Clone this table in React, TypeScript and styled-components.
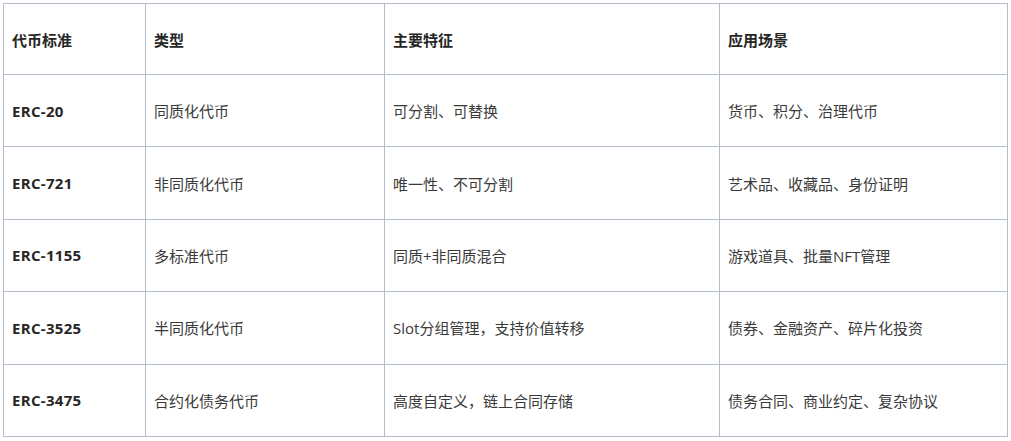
import React from "react";
import styled, { createGlobalStyle } from "styled-components";

const Global = createGlobalStyle`
  html, body { margin: 0; padding: 0; background: #ffffff; }
  body { font-family: "Open Sans", "Noto Sans CJK SC", sans-serif; }
`;

const Wrap = styled.div`
  padding: 3px 0 0 3px;
`;

const Table = styled.table`
  border-collapse: collapse;
  table-layout: fixed;
  width: 1004px;
  color: #333333;
  font-size: 15px;
`;

const Cell = styled.td<{ $bold?: boolean }>`
  border: 1px solid #b4bfcb;
  height: 71.4px;
  padding: 0 0 0 8px;
  vertical-align: middle;
  font-weight: ${(p) => (p.$bold ? 700 : 400)};
  color: ${(p) => (p.$bold ? "#262626" : "#3a3a3a")};
  letter-spacing: ${(p) => (p.$bold ? "0.3px" : "0")};
  white-space: nowrap;
`;

const Head = styled(Cell).attrs({ as: "th" })`
  height: 70px;
  text-align: left;
  font-weight: 700;
  color: #262626;
  letter-spacing: 0;
`;

const rows = [
  ["ERC-20", "同质化代币", "可分割、可替换", "货币、积分、治理代币"],
  ["ERC-721", "非同质化代币", "唯一性、不可分割", "艺术品、收藏品、身份证明"],
  ["ERC-1155", "多标准代币", "同质+非同质混合", "游戏道具、批量NFT管理"],
  ["ERC-3525", "半同质化代币", "Slot分组管理，支持价值转移", "债券、金融资产、碎片化投资"],
  ["ERC-3475", "合约化债务代币", "高度自定义，链上合同存储", "债务合同、商业约定、复杂协议"],
];

export default function App() {
  return (
    <Wrap>
      <Global />
      <Table>
        <colgroup>
          <col style={{ width: 142 }} />
          <col style={{ width: 239 }} />
          <col style={{ width: 335 }} />
          <col style={{ width: 288 }} />
        </colgroup>
        <thead>
          <tr>
            <Head>代币标准</Head>
            <Head>类型</Head>
            <Head>主要特征</Head>
            <Head>应用场景</Head>
          </tr>
        </thead>
        <tbody>
          {rows.map((r) => (
            <tr key={r[0]}>
              <Cell $bold>{r[0]}</Cell>
              <Cell>{r[1]}</Cell>
              <Cell>{r[2]}</Cell>
              <Cell>{r[3]}</Cell>
            </tr>
          ))}
        </tbody>
      </Table>
    </Wrap>
  );
}
